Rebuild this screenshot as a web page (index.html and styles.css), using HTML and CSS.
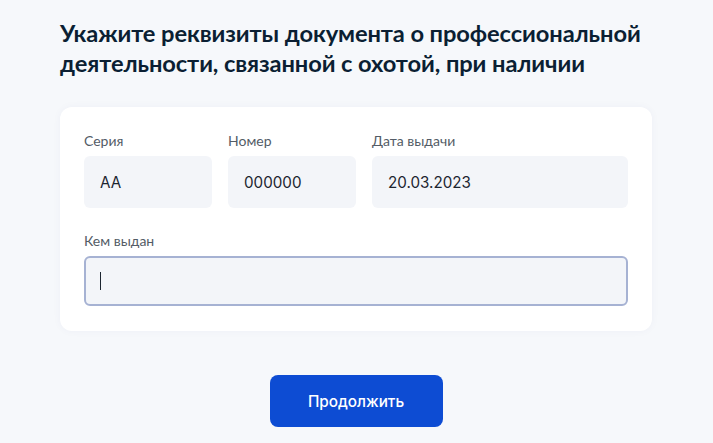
FILE: index.html
```html
<!DOCTYPE html>
<html lang="ru">
  <head>
    <meta charset="UTF-8" />
    <meta name="viewport" content="width=device-width, initial-scale=1.0" />
    <title>Реквизиты документа</title>
    <link rel="stylesheet" href="styles.css">
  </head>
  <body>
    <main class="page">
      <h1 class="title">Укажите реквизиты документа о профессиональной деятельности, связанной с охотой, при наличии</h1>

      <form class="card">
        <div class="row">
          <label class="field field-short">
            <span class="label">Серия</span>
            <span class="input">AA</span>
          </label>
          <label class="field field-short">
            <span class="label">Номер</span>
            <span class="input">000000</span>
          </label>
          <label class="field field-wide">
            <span class="label">Дата выдачи</span>
            <span class="input">20.03.2023</span>
          </label>
        </div>
        <label class="field">
          <span class="label">Кем выдан</span>
          <span class="input input-focus"><span class="caret"></span></span>
        </label>
      </form>

      <div class="actions">
        <button class="btn" type="button">Продолжить</button>
      </div>
    </main>
  </body>
</html>
```

FILE: styles.css
```css
*,
*::before,
*::after {
  box-sizing: border-box;
}
:root {
  --bg: #f6f8fb;
  --text: #0b1f33;
  --label: #535c66;
  --field: #f3f5f9;
  --blue: #0d4cd3;
}
body {
  margin: 0;
  background: var(--bg);
  height: 100vh;
  font-family: "Lato", "Noto Sans", sans-serif;
  color: var(--text);
}

.page {
  width: 592px;
  margin-left: 60px;
  padding-top: 18px;
}

.title {
  margin: 0 0 29px;
  font-size: 23.7px;
  line-height: 30px;
  font-weight: 700;
  letter-spacing: -0.1px;
}

.card {
  background: #fff;
  border-radius: 12px;
  padding: 25px 24px 25px;
  display: flex;
  flex-direction: column;
  gap: 24px;
  box-shadow: 0 0 8px rgba(30, 60, 120, 0.04);
}

.row {
  display: flex;
  gap: 16px;
}

.field {
  display: flex;
  flex-direction: column;
  gap: 6px;
}
.field-short {
  width: 128px;
}
.field-wide {
  width: 256px;
}

.label {
  font-size: 14px;
  line-height: 18px;
  color: var(--label);
}

.input {
  height: 52px;
  border-radius: 6px;
  background: var(--field);
  padding: 0 16px;
  display: flex;
  align-items: center;
  font-family: "Inter", "Noto Sans", sans-serif;
  font-size: 15.2px;
  color: #1c2530;
}

.input-focus {
  height: 50px;
  border: 2px solid #a6b2d3;
  padding: 0 14px;
}

.caret {
  width: 1px;
  height: 18px;
  background: #1c2530;
}

.actions {
  display: flex;
  justify-content: center;
  padding-top: 44px;
}

.btn {
  width: 173px;
  height: 52px;
  border: 0;
  border-radius: 8px;
  background: var(--blue);
  color: #fff;
  font-family: "Inter", "Noto Sans", sans-serif;
  font-size: 15.3px;
  font-weight: 500;
}
```
